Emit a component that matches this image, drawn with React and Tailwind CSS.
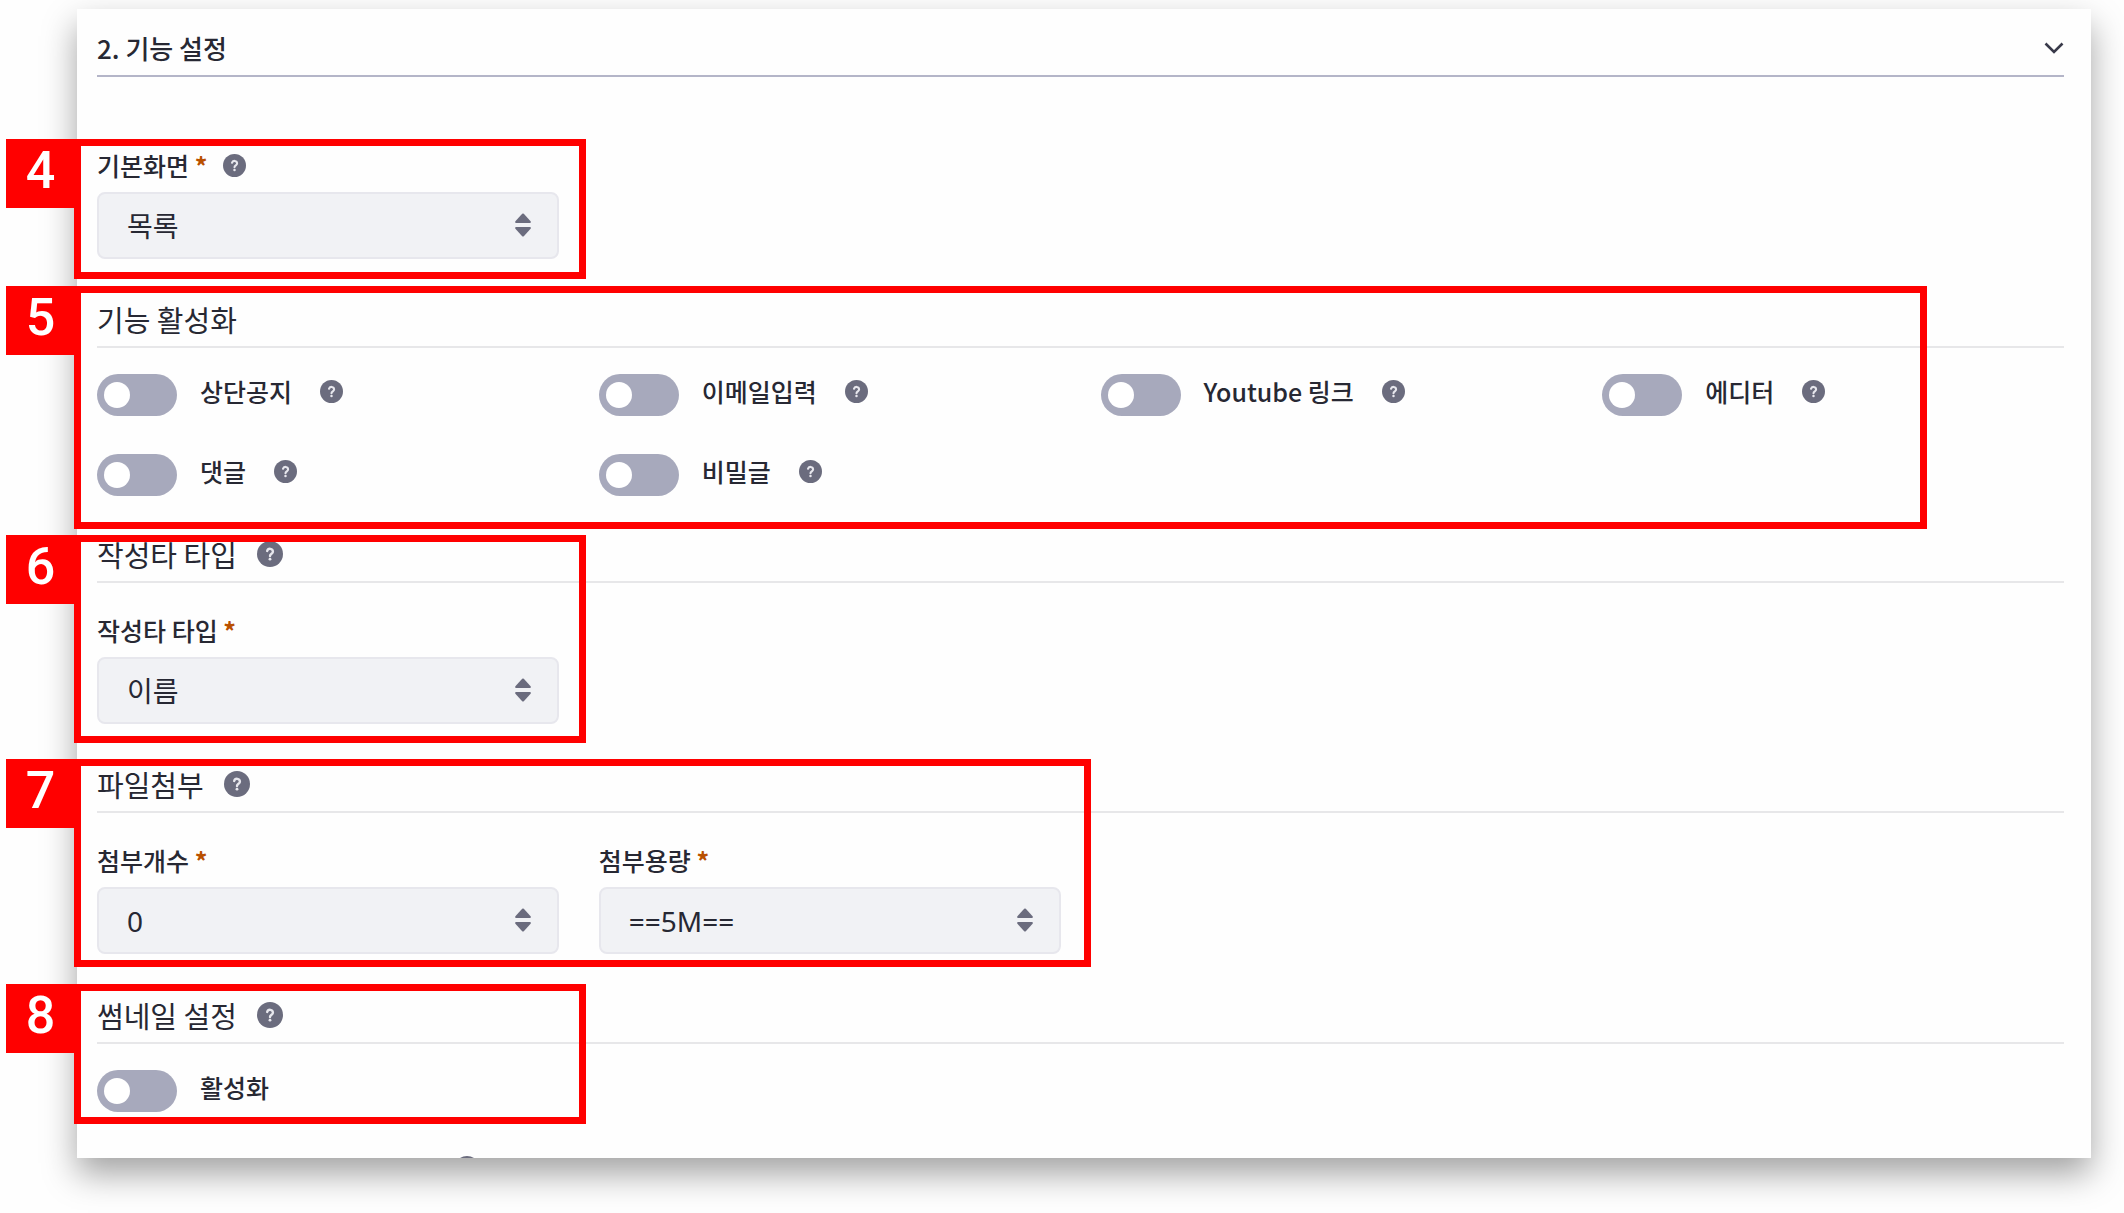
import { useState } from 'react';

const HelpIcon = ({ className }) => (
  <svg viewBox="0 0 24 24" className={className} fill="none" aria-hidden="true">
    <circle cx="12" cy="12" r="12" fill="#6b6c7e" />
    <path d="M9.4 9.200a2.700 2.700 0 0 1 5.300.7c0 1.800-2.700 2-2.700 3.900" stroke="#e7e7ed" strokeWidth="2.200" strokeLinecap="round" />
    <circle cx="12" cy="16.800" r="1.300" fill="#e7e7ed" />
  </svg>
);

const HelpButton = ({ label, large }) => (
  <button type="button" aria-label={`${label} 도움말`} className="shrink-0 rounded-full">
    <HelpIcon className={large ? 'w-[26px] h-[26px]' : 'w-[23px] h-[23px]'} />
  </button>
);

// Red frame with its number tab, laid over a section
const Marker = ({ number, className }) => (
  <div className={`absolute inset-y-0 -left-[23px] border-[7px] border-[#ff0000] pointer-events-none ${className}`}>
    <span className="absolute -top-[7px] -left-[75px] w-[69px] h-[69px] bg-[#ff0000] text-white text-[52px] leading-[64px] font-medium text-center font-['Roboto',sans-serif]">
      {number}
    </span>
  </div>
);

const SubHeading = ({ children, help }) => (
  <div className="flex items-center gap-5 pb-[11px] border-b-2 border-[#e7e7e9]">
    <h3 className="text-[29px] leading-8 font-normal">{children}</h3>
    {help && <HelpButton label={children} large />}
  </div>
);

const SelectField = ({ id, label, options, help }) => {
  const [value, setValue] = useState(options[0]);

  return (
    <div>
      <div className="flex items-center gap-4 mb-[11px]">
        <label htmlFor={id} className="text-[25px] leading-8 font-medium">
          {label} <span className="text-[#b95000] font-bold">*</span>
        </label>
        {help && <HelpButton label={label} />}
      </div>
      <div className="relative">
        <select
          id={id}
          value={value}
          onChange={e => setValue(e.target.value)}
          className="block appearance-none w-full h-[67px] pl-7 pr-16 text-[28px] font-['Noto_Sans','Noto_Sans_CJK_KR',sans-serif] bg-[#f1f2f5] border-2 border-[#e7e7ed] rounded-lg"
        >
          {options.map(option => <option key={option} value={option}>{option}</option>)}
        </select>
        <svg viewBox="0 0 16 24" className="absolute right-7 top-[21px] w-4 h-6 pointer-events-none" fill="#6b6c7e" aria-hidden="true">
          <path d="M7.200.8a1.200 1.200 0 0 1 1.600 0L15.600 8.200q.8 1.800-.8 1.800H1.200Q-.4 10 .4 8.200z" />
          <path d="M7.200 23.200a1.200 1.200 0 0 0 1.600 0L15.600 15.800q.8-1.800-.8-1.800H1.200q-1.600 0-.8 1.800z" />
        </svg>
      </div>
    </div>
  );
};

const ToggleField = ({ id, label, help }) => {
  const [checked, setChecked] = useState(false);

  return (
    <div className="flex items-start h-[42px]">
      <input
        type="checkbox"
        role="switch"
        id={id}
        checked={checked}
        onChange={e => setChecked(e.target.checked)}
        className="appearance-none shrink-0 flex items-center w-20 h-[42px] px-[7px] rounded-full bg-[#a7a9bc] checked:bg-[#0b5fff] checked:justify-end before:content-[''] before:block before:w-[26px] before:h-[26px] before:rounded-full before:bg-white"
      />
      <div className="flex items-center gap-7 h-[34px] pl-[23px]">
        <label htmlFor={id} className="text-[25px] leading-8 font-medium whitespace-nowrap">{label}</label>
        {help && <HelpButton label={label} />}
      </div>
    </div>
  );
};

const features = [
  { id: 'notice', label: '상단공지' },
  { id: 'email', label: '이메일입력' },
  { id: 'youtube', label: 'Youtube 링크' },
  { id: 'editor', label: '에디터' },
  { id: 'comment', label: '댓글' },
  { id: 'secret', label: '비밀글' },
];

const App = () => {
  const [open, setOpen] = useState(true);

  return (
    <div className="min-h-screen bg-[#fefefe] pt-[9px] pb-[55px] pl-[77px] pr-[33px] text-[#272833] font-['Noto_Sans_CJK_KR',sans-serif]">
      <main className="bg-[#fefefe] pl-5 pr-[27px] shadow-[0_16px_32px_rgba(0,0,0,0.36)]">
        <div className="flex items-center justify-between pt-[23px] pb-[11px] border-b-2 border-[#b4b5c8]">
          <h2 className="text-[26px] leading-8 font-medium">2. 기능 설정</h2>
          <button type="button" aria-label="접기" aria-expanded={open} onClick={() => setOpen(!open)}>
            <svg viewBox="0 0 20 20" className="w-5 h-5" fill="none" stroke="#393a4a" strokeWidth="2.6" aria-hidden="true">
              <path d="M1.500 5.500 10 14l8.500-8.500" />
            </svg>
          </button>
        </div>

        {open && (
          <>
            <section className="relative mt-[62px] pt-[10px] pb-5">
              <div className="grid grid-cols-4 gap-x-10">
                <SelectField id="view" label="기본화면" options={['목록']} help />
              </div>
              <Marker number={4} className="w-[calc(25%+20px)]" />
            </section>

            <section className="relative mt-[7px] pt-[17px] pb-[33px]">
              <SubHeading>기능 활성화</SubHeading>
              <div className="grid grid-cols-4 gap-x-10 gap-y-[38px] pt-[26px]">
                {features.map(feature => (
                  <ToggleField key={feature.id} id={feature.id} label={feature.label} help />
                ))}
              </div>
              <Marker number={5} className="right-[137px]" />
            </section>

            <section className="relative mt-[6px] pt-[3px] pb-[19px]">
              <SubHeading help>작성타 타입</SubHeading>
              <div className="grid grid-cols-4 gap-x-10 pt-[31px]">
                <SelectField id="writer" label="작성타 타입" options={['이름']} />
              </div>
              <Marker number={6} className="w-[calc(25%+20px)]" />
            </section>

            <section className="relative mt-4 pt-[9px] pb-[13px]">
              <SubHeading help>파일첨부</SubHeading>
              <div className="grid grid-cols-4 gap-x-10 pt-[31px]">
                <SelectField id="fileCount" label="첨부개수" options={['0']} />
                <SelectField id="fileSize" label="첨부용량" options={['==5M==']} />
              </div>
              <Marker number={7} className="w-[calc(50%+33px)]" />
            </section>

            <section className="relative mt-[17px] pt-[15px] pb-3">
              <SubHeading help>썸네일 설정</SubHeading>
              <div className="pt-[26px]">
                <ToggleField id="thumbnail" label="활성화" />
              </div>
              <Marker number={8} className="w-[calc(25%+20px)]" />
            </section>

            {/* next row, only its top edge is in view */}
            <div className="h-[34px] pt-8 pl-[357px] overflow-hidden">
              <HelpIcon className="w-[26px] h-[26px]" />
            </div>
          </>
        )}
      </main>
    </div>
  );
};

export default App;
